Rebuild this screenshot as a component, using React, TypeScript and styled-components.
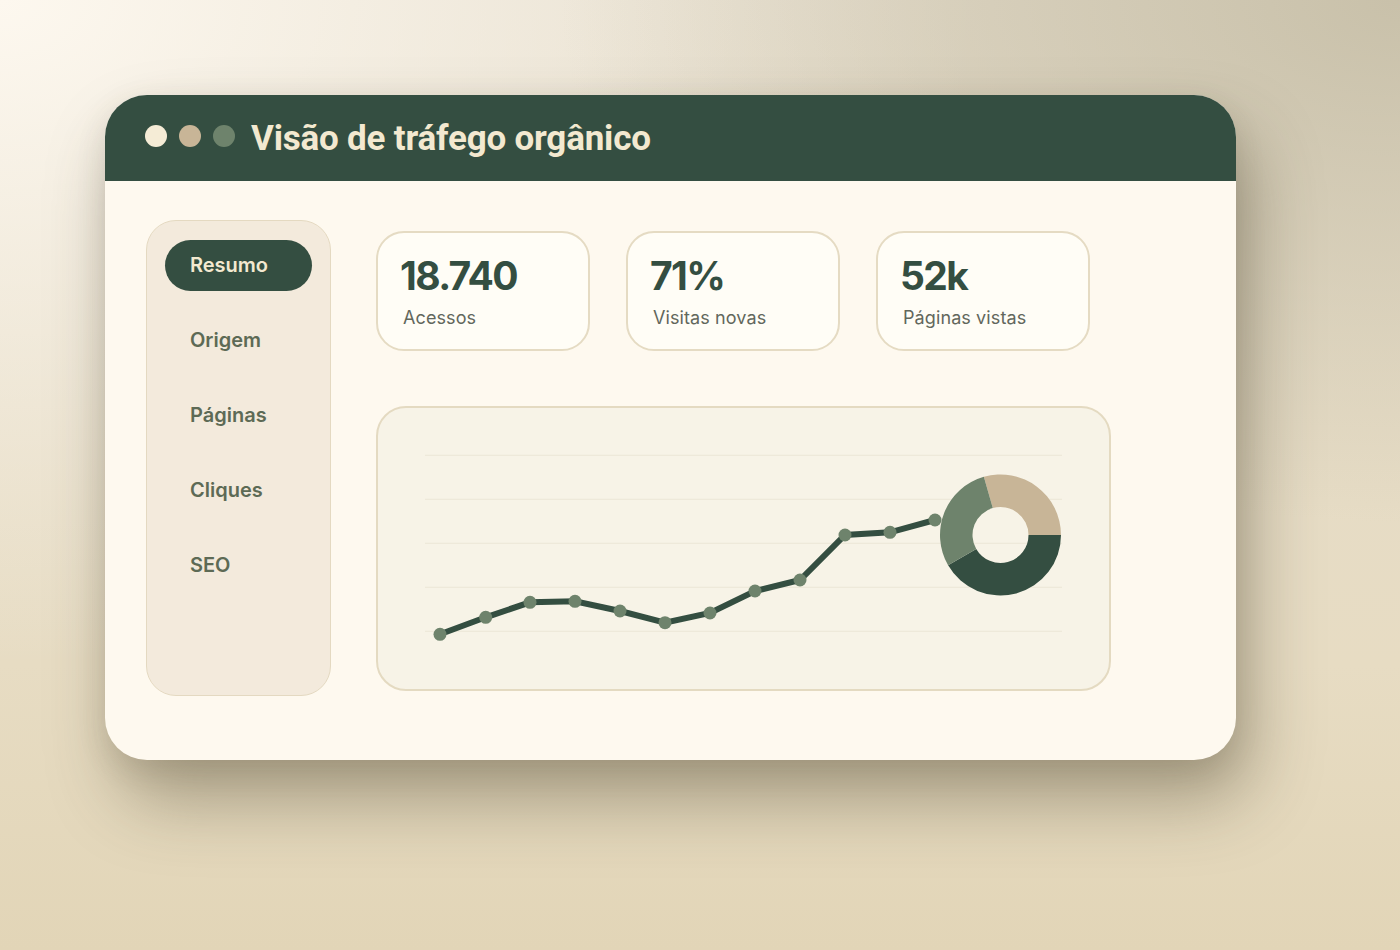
import React from "react";
import styled, { createGlobalStyle } from "styled-components";

const GlobalStyle = createGlobalStyle`
  html, body { margin: 0; padding: 0; height: 100%; }
  body {
    font-family: "Inter", "Noto Sans", sans-serif;
    background:
      radial-gradient(ellipse 60% 55% at 100% 0%, rgba(196,188,164,0.85) 0%, rgba(196,188,164,0) 100%),
      radial-gradient(ellipse 70% 70% at 0% 0%, #fdf8ef 0%, rgba(253,248,239,0) 100%),
      linear-gradient(180deg, #e4dccb 0%, #e7dcc3 70%, #e2d5b7 100%);
    overflow: hidden;
  }
  #root { height: 100%; }
`;

const Page = styled.div`
  height: 100%;
  box-sizing: border-box;
  padding: 95px 0 0 105px;
`;

const Window = styled.section`
  width: 1131px;
  height: 665px;
  border-radius: 42px;
  background: #fef9ef;
  overflow: hidden;
  box-shadow: 14px 40px 70px rgba(70, 62, 40, 0.4), 0 10px 30px rgba(70, 62, 40, 0.12);
  display: flex;
  flex-direction: column;
`;

const Header = styled.header`
  height: 86px;
  flex: none;
  background: #344e41;
  display: flex;
  align-items: center;
  padding: 0 0 0 40px;
  gap: 12px;
`;

const Dot = styled.span<{ $color: string }>`
  width: 22px;
  height: 22px;
  border-radius: 50%;
  background: ${(p) => p.$color};
  margin-top: -4px;
`;

const Title = styled.h1`
  margin: 0 0 0 4px;
  font-family: "Roboto", "Liberation Sans", sans-serif;
  font-weight: 700;
  font-size: 35px;
  color: #f3e9d0;
  letter-spacing: -0.2px;
`;

const Body = styled.div`
  display: flex;
  align-items: flex-start;
  gap: 45px;
  padding: 39px 41px 0 41px;
`;

const Sidebar = styled.nav`
  width: 185px;
  height: 476px;
  box-sizing: border-box;
  border-radius: 30px;
  background: #f3eadc;
  border: 1px solid #e4d9c1;
  padding: 19px 18px;
  display: flex;
  flex-direction: column;
  gap: 24px;
`;

const NavItem = styled.div<{ $active?: boolean }>`
  height: 51px;
  box-sizing: border-box;
  border-radius: 26px;
  padding: 0 0 2px 25px;
  display: flex;
  align-items: center;
  font-size: 20px;
  font-weight: 600;
  color: ${(p) => (p.$active ? "#f3e9d0" : "#5d6a55")};
  background: ${(p) => (p.$active ? "#344e41" : "transparent")};
`;

const Main = styled.div`
  padding-top: 11px;
  display: flex;
  flex-direction: column;
  gap: 55px;
`;

const Stats = styled.div`
  display: flex;
  gap: 36px;
`;

const StatCard = styled.div`
  width: 214px;
  height: 120px;
  box-sizing: border-box;
  border-radius: 28px;
  border: 2px solid #e5dbc3;
  background: #fffdf6;
  padding: 19px 0 0 22px;
`;

const StatValue = styled.div`
  font-size: 39px;
  line-height: 47px;
  font-weight: 700;
  letter-spacing: -1.6px;
  color: #344e41;
`;

const StatLabel = styled.div`
  margin: 8px 0 0 3px;
  font-size: 18px;
  line-height: 22px;
  letter-spacing: 0.1px;
  color: #62675c;
`;

const ChartCard = styled.div`
  width: 735px;
  height: 285px;
  box-sizing: border-box;
  border-radius: 30px;
  border: 2px solid #e4dac1;
  background: #f7f3e7;
  overflow: hidden;
`;

const ChartSvg = styled.svg`
  display: block;
  margin: -2px;
`;

const points: [number, number][] = [
  [64, 228.3], [109.7, 211.3], [154, 196.3], [199, 195.3], [244, 205], [289, 216.7],
  [334, 207], [379, 185], [424, 174], [469, 129], [514, 126.3], [559, 114],
];

const gridYs = [49.3, 93.3, 137.3, 181.3, 225.3];

const cx = 624.5;
const cy = 129;
const R = 60.5;
const r = 28;

function arc(a0: number, a1: number) {
  const rad = (a: number) => ((a - 90) * Math.PI) / 180;
  const p = (rr: number, a: number) => [cx + rr * Math.cos(rad(a)), cy + rr * Math.sin(rad(a))];
  const large = a1 - a0 > 180 ? 1 : 0;
  const [x0, y0] = p(R, a0);
  const [x1, y1] = p(R, a1);
  const [x2, y2] = p(r, a1);
  const [x3, y3] = p(r, a0);
  return `M${x0} ${y0} A${R} ${R} 0 ${large} 1 ${x1} ${y1} L${x2} ${y2} A${r} ${r} 0 ${large} 0 ${x3} ${y3} Z`;
}

const navItems = ["Resumo", "Origem", "Páginas", "Cliques", "SEO"];
const stats = [
  { value: "18.740", label: "Acessos" },
  { value: "71%", label: "Visitas novas" },
  { value: "52k", label: "Páginas vistas" },
];

export default function App() {
  return (
    <>
      <GlobalStyle />
      <Page>
        <Window>
          <Header>
            <Dot $color="#f5ecd6" />
            <Dot $color="#c8b597" />
            <Dot $color="#6e836c" />
            <Title>Visão de tráfego orgânico</Title>
          </Header>
          <Body>
            <Sidebar>
              {navItems.map((n, i) => (
                <NavItem key={n} $active={i === 0}>
                  {n}
                </NavItem>
              ))}
            </Sidebar>
            <Main>
              <Stats>
                {stats.map((s) => (
                  <StatCard key={s.label}>
                    <StatValue>{s.value}</StatValue>
                    <StatLabel>{s.label}</StatLabel>
                  </StatCard>
                ))}
              </Stats>
              <ChartCard>
                <ChartSvg width={735} height={285} viewBox="0 0 735 285">
                  {gridYs.map((y) => (
                    <line key={y} x1={49} x2={686} y1={y} y2={y} stroke="#ebe6d7" strokeWidth={1} />
                  ))}
                  <polyline
                    points={points.map((p) => p.join(",")).join(" ")}
                    fill="none"
                    stroke="#344e41"
                    strokeWidth={6}
                    strokeLinejoin="miter"
                  />
                  {points.map(([x, y]) => (
                    <circle key={x} cx={x} cy={y} r={6.5} fill="#6e836c" />
                  ))}
                  <path d={arc(-16, 90)} fill="#c8b597" />
                  <path d={arc(90, 240)} fill="#344e41" />
                  <path d={arc(240, 344)} fill="#6e836c" />
                </ChartSvg>
              </ChartCard>
            </Main>
          </Body>
        </Window>
      </Page>
    </>
  );
}
